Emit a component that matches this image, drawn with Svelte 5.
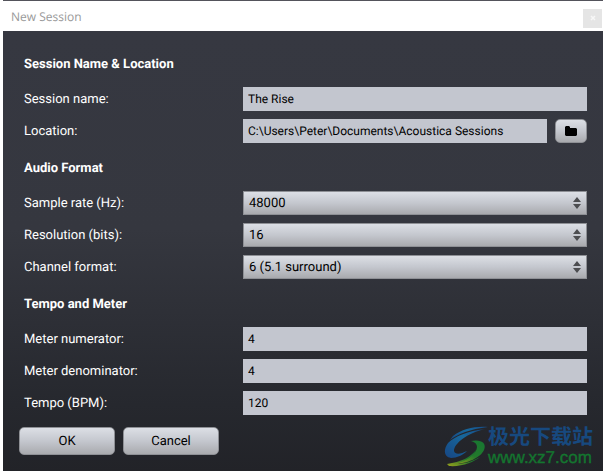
<script>
	const rates = ['44100', '48000', '96000'];
	const depths = ['16', '24', '32'];
	const channels = ['1 (mono)', '2 (stereo)', '6 (5.1 surround)'];

	let name = $state('The Rise');
	let location = $state('C:\\Users\\Peter\\Documents\\Acoustica Sessions');
	let rate = $state('48000');
	let depth = $state('16');
	let channel = $state('6 (5.1 surround)');
	let numerator = $state('4');
	let denominator = $state('4');
	let tempo = $state('120');
</script>

{#snippet dropdown(id, options, value, onchange)}
	<div class="select">
		<select {id} {value} {onchange}>
			{#each options as option}
				<option value={option}>{option}</option>
			{/each}
		</select>
		<svg class="arrows" viewBox="0 0 8 12" width="8" height="12" aria-hidden="true">
			<path d="M4 0 8 5H0zM0 7h8l-4 5z" />
		</svg>
	</div>
{/snippet}

<main class="window">
	<header class="titlebar">
		<span>New Session</span>
		<button class="close" type="button" aria-label="Close">
			<svg viewBox="0 0 6 6" width="6" height="6"><path d="M1 1l4 4M5 1 1 5" /></svg>
		</button>
	</header>

	<form class="dialog">
		<section>
			<h2>Session Name &amp; Location</h2>
			<div class="row">
				<label for="name">Session name:</label>
				<input id="name" type="text" bind:value={name} />
			</div>
			<div class="row">
				<label for="location">Location:</label>
				<div class="path">
					<input id="location" type="text" bind:value={location} />
					<button class="browse" type="button" aria-label="Browse">
						<svg viewBox="0 0 12 10" width="12" height="10">
							<path d="M1 0h3l1 1v1h6l1 1v6l-1 1H1L0 9V1z" />
						</svg>
					</button>
				</div>
			</div>
		</section>

		<section>
			<h2>Audio Format</h2>
			<div class="row">
				<label for="rate">Sample rate (Hz):</label>
				{@render dropdown('rate', rates, rate, (e) => (rate = e.target.value))}
			</div>
			<div class="row">
				<label for="depth">Resolution (bits):</label>
				{@render dropdown('depth', depths, depth, (e) => (depth = e.target.value))}
			</div>
			<div class="row">
				<label for="channel">Channel format:</label>
				{@render dropdown('channel', channels, channel, (e) => (channel = e.target.value))}
			</div>
		</section>

		<section>
			<h2>Tempo and Meter</h2>
			<div class="row">
				<label for="numerator">Meter numerator:</label>
				<input id="numerator" type="text" bind:value={numerator} />
			</div>
			<div class="row">
				<label for="denominator">Meter denominator:</label>
				<input id="denominator" type="text" bind:value={denominator} />
			</div>
			<div class="row">
				<label for="tempo">Tempo (BPM):</label>
				<input id="tempo" type="text" bind:value={tempo} />
			</div>
		</section>

		<footer>
			<button type="button">OK</button>
			<button type="button">Cancel</button>
		</footer>
	</form>

	<div class="watermark">
		<svg viewBox="0 0 44 42" width="44" height="42" aria-hidden="true">
			<defs>
				<linearGradient id="sky" x1="0" y1="1" x2="1" y2="0">
					<stop offset="0" stop-color="#174683" />
					<stop offset="0.6" stop-color="#17679b" />
					<stop offset="1" stop-color="#174b88" />
				</linearGradient>
				<linearGradient id="leaf" x1="0" y1="1" x2="1" y2="0">
					<stop offset="0" stop-color="#99a01c" />
					<stop offset="0.5" stop-color="#237a2b" />
					<stop offset="1" stop-color="#167633" />
				</linearGradient>
			</defs>
			<path fill="url(#sky)" d="M44 1C31 0 18 3 9 10L6 14C14 8 26 3 44 1z" />
			<path fill="url(#sky)" d="M41 3C24 5 11 10 4 17C-1 24 0 31 7 32C13 32 19 29 23 25C17 28 11 29 10 25C10 17 24 7 41 3z" />
			<path fill="url(#leaf)" d="M27 15C37 13 43 17 40 24C37 31 24 38 9 38C22 35 33 28 33 21C33 18 31 16 27 15z" />
			<path fill="url(#leaf)" d="M32 24C27 31 17 36 3 38L5 40C18 41 30 36 36 31C27 36 19 38 12 38C22 35 30 30 32 24z" />
		</svg>
		<div class="site">
			<span class="site-name">极光下载站</span>
			<span class="site-url">www.xz7.com</span>
		</div>
	</div>
</main>

<style>
	:global(body) {
		background: #fff;
	}

	.window {
		position: relative;
		margin: 0 1px 0 3px;
		border-top: 1px solid #53535b;
		font-family: Roboto, 'Liberation Sans', sans-serif;
		font-size: 13px;
		text-rendering: geometricPrecision;
		color: #fff;
	}

	.titlebar {
		display: flex;
		justify-content: space-between;
		align-items: center;
		height: 30px;
		padding: 0 1px 0 8px;
		box-sizing: border-box;
		background: #fff;
		color: #999;
		font-family: 'Open Sans', sans-serif;
		font-size: 12px;
	}

	button {
		display: flex;
		align-items: center;
		justify-content: center;
		box-sizing: border-box;
		padding: 0;
		border: 1px solid #8e9095;
		border-radius: 5px;
		background: linear-gradient(#dcdfe5, #c4c7ce 50%, #a9aaae);
		color: #000;
		font: inherit;
		text-rendering: inherit;
	}

	.close {
		width: 19px;
		height: 19px;
		margin-top: 4px;
		border: none;
		border-radius: 0;
		background: #e5e5e5;
	}

	.close path {
		stroke: #f7f7f7;
		stroke-width: 1.5;
	}

	.dialog {
		display: flex;
		flex-direction: column;
		gap: 12px;
		padding: 20px 16px 16px;
		background: linear-gradient(#363841, #35373f 45%, #26282e 85%, #222328);
	}

	section {
		display: flex;
		flex-direction: column;
		gap: 8px;
		padding-left: 5px;
	}

	h2 {
		margin: 0;
		font-size: 13px;
		font-weight: 700;
		line-height: 28px;
	}

	.row {
		display: grid;
		grid-template-columns: 219px 1fr;
		align-items: center;
		height: 24px;
	}

	.path {
		display: flex;
		gap: 8px;
	}

	input,
	select {
		box-sizing: border-box;
		width: 100%;
		min-width: 0;
		height: 24px;
		border: none;
		border-radius: 0;
		color: #000;
		font: inherit;
		text-rendering: inherit;
	}

	input {
		padding: 0 5px;
		background: #c3c6cf;
		font-size: 12px;
	}

	.select {
		position: relative;
	}

	select {
		display: block;
		appearance: none;
		padding: 0 24px 0 5px;
		border: 1px solid #8e9095;
		background: linear-gradient(#dcdfe5, #c4c7ce 50%, #a9aaae);
	}

	.arrows {
		position: absolute;
		top: 6px;
		right: 6px;
		fill: #4c4d50;
		pointer-events: none;
	}

	.browse {
		flex: none;
		width: 32px;
		height: 24px;
	}

	footer {
		display: flex;
		gap: 8px;
	}

	footer button {
		width: 96px;
		height: 28px;
	}

	.watermark {
		position: absolute;
		right: 10px;
		bottom: 2px;
		display: flex;
		align-items: center;
		pointer-events: none;
	}

	.site {
		display: flex;
		flex-direction: column;
	}

	.site-name {
		color: #17497f;
		font-family: 'Noto Sans CJK SC', sans-serif;
		font-size: 21px;
		font-weight: 700;
		line-height: 22px;
	}

	.site-url {
		color: #14752f;
		font-family: 'Liberation Sans', sans-serif;
		font-size: 17px;
		line-height: 22px;
		-webkit-text-stroke: 0.4px #14752f;
	}
</style>
